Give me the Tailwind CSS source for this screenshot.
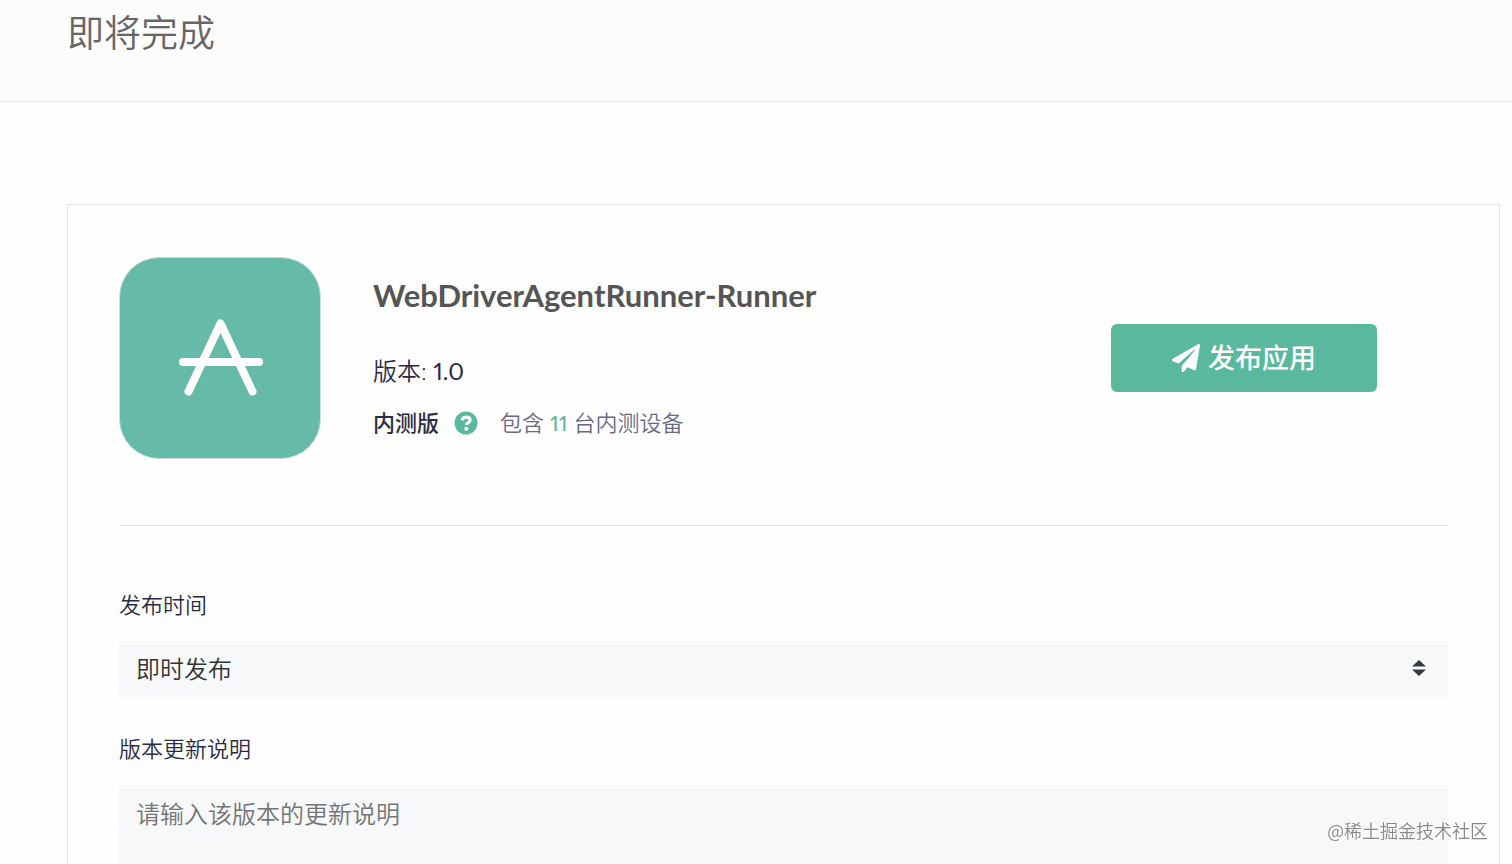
<!DOCTYPE html>
<html lang="zh-CN">

<head>
    <meta charset="UTF-8">
    <meta name="viewport" content="width=device-width, initial-scale=1.0">
    <title>即将完成</title>
    <script src="https://cdn.jsdelivr.net/npm/@tailwindcss/browser@4"></script>
</head>

<body class="h-screen overflow-hidden bg-[#fefefe] font-['Lato','Noto_Sans_CJK_SC',sans-serif] font-[350] text-[#2b2c44] proportional-nums">
    <header class="border-b border-[#e6e6e6] bg-[#fcfcfc] pt-2 pb-11 pl-[67px]">
        <h1 class="text-[37px] leading-[49px] font-[350] text-[#666]">即将完成</h1>
    </header>

    <main class="mt-[102px] mr-3 ml-[67px] border border-[#e3e4e6] px-[51px] pt-[52px]">
        <section class="flex items-center border-b border-[#dfe0e2] pb-[66px]">
            <!-- app icon -->
            <svg class="size-[202px] shrink-0 rounded-[40px] border border-[#cfdcd8] bg-[#65bba8]" viewBox="0 0 200 200"
                fill="none" stroke="#fff" stroke-width="8" stroke-linecap="round" stroke-linejoin="round" aria-hidden="true">
                <path d="M68.500 133.500 100.500 65.500 132.500 133.500M63 104h76" />
            </svg>

            <div class="ml-[52px] flex-1">
                <h2 class="mb-[38px] text-[31px] leading-10 font-bold text-[#555]">WebDriverAgentRunner-Runner</h2>
                <p class="mb-4 text-2xl leading-9">版本: <span class="font-normal">1.0</span></p>
                <p class="flex items-center text-[22px] leading-9">
                    <span class="font-medium">内测版</span>
                    <button type="button" class="mr-[22px] ml-[15px]" aria-label="帮助">
                        <svg class="size-6" viewBox="0 0 24 24" aria-hidden="true">
                            <circle cx="12" cy="12" r="11.500" fill="#5ab89d" />
                            <path d="M8 9.200C8.600 7.100 10 6.100 12.100 6.100c2.400 0 4 1.200 4 3.100 0 2.500-3.700 2.400-3.700 4.900" fill="none"
                                stroke="#fff" stroke-width="3.200" />
                            <circle cx="12.300" cy="17.700" r="2" fill="#fff" />
                        </svg>
                    </button>
                    <span class="text-[#686a82]">包含 <span class="font-normal text-[#5ab89d]">11</span> 台内测设备</span>
                </p>
            </div>

            <button type="button"
                class="mr-[71px] flex h-[68px] w-[266px] items-center justify-center gap-2 rounded-md bg-[#5ab89d] text-[27px] font-medium text-white">
                <svg class="size-7" viewBox="0 0 512 512" fill="currentColor" aria-hidden="true">
                    <path d="M476 3.200 12.500 270.600c-18.100 10.400-15.800 35.600 2.200 43.200L121 358.400l287.300-253.200c5.500-4.900 13.300 2.600 8.600 8.300L176 407v80.500c0 23.600 28.500 32.900 42.500 15.800L282 426l124.600 52.200c14.200 6 30.400-2.900 33-18.200l72-432C515 7.800 493.300-6.800 476 3.200z" />
                </svg>
                发布应用
            </button>
        </section>

        <form class="mt-[63px]">
            <label for="time" class="mb-5 block text-[22px] leading-8">发布时间</label>
            <div class="relative mb-9">
                <select id="time"
                    class="block h-14 w-full appearance-none bg-[#f6f8fa] px-[17px] text-2xl font-[350] text-[#333]">
                    <option>即时发布</option>
                    <option>手动发布</option>
                </select>
                <svg class="pointer-events-none absolute top-[19px] right-[22px] h-4 w-[14px]" viewBox="0 0 14 16"
                    fill="#343a40" aria-hidden="true">
                    <path d="M0 6.500 7 0l7 6.500zM0 9.500h14L7 16z" />
                </svg>
            </div>

            <label for="note" class="mb-5 block text-[22px] leading-8">版本更新说明</label>
            <textarea id="note" rows="5" placeholder="请输入该版本的更新说明"
                class="block w-full resize-none bg-[#f6f8fa] px-[17px] py-[11px] text-2xl leading-9 font-[350] placeholder:text-[#757575]"></textarea>
        </form>
    </main>

    <p class="fixed right-6 bottom-4 font-['Noto_Sans_CJK_SC',sans-serif] text-lg leading-9 text-[#888] text-shadow-[1px_1px_1px_#fff]">@稀土掘金技术社区</p>
</body>

</html>
